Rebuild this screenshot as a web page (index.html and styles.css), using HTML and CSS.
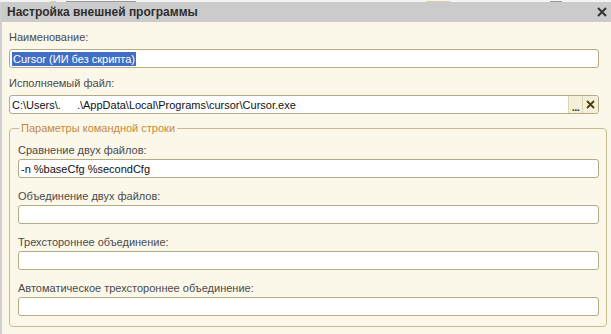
FILE: index.html
```html
<!DOCTYPE html>
<html lang="ru">
<head>
<meta charset="utf-8">
<title>Настройка внешней программы</title>
<link rel="stylesheet" href="styles.css">
</head>
<body>
<div class="screen">
  <div class="behind">
    <span class="mark mark-a"></span>
    <span class="mark mark-b"></span>
    <span class="mark mark-c"></span>
    <span class="mark mark-d"></span>
  </div>
  <div class="dialog">
    <div class="titlebar">
      <span class="title">Настройка внешней программы</span>
      <svg class="close" viewBox="0 0 10 10" aria-hidden="true"><path d="M1 1 L9 9 M9 1 L1 9" stroke="#333" stroke-width="2" fill="none"/></svg>
    </div>
    <div class="content">
      <div class="field">
        <div class="label">Наименование:</div>
        <div class="input"><span class="sel">Cursor (ИИ без скрипта)</span></div>
      </div>
      <div class="field">
        <div class="label">Исполняемый файл:</div>
        <div class="input input-btns">
          <span class="val">C:\Users\.<span class="gap"></span>.\AppData\Local\Programs\cursor\Cursor.exe</span>
          <span class="btn btn-dots">...</span>
          <span class="btn btn-x"><svg viewBox="0 0 9 9" aria-hidden="true"><path d="M1 1 L8 8 M8 1 L1 8" stroke="#4b3f0c" stroke-width="1.8" fill="none"/></svg></span>
        </div>
      </div>
      <fieldset class="group">
        <legend class="legend">Параметры командной строки</legend>
        <div class="field">
          <div class="label label-g">Сравнение двух файлов:</div>
          <div class="input"><span class="val">-n %baseCfg %secondCfg</span></div>
        </div>
        <div class="field">
          <div class="label label-g">Объединение двух файлов:</div>
          <div class="input"></div>
        </div>
        <div class="field">
          <div class="label label-g">Трехстороннее объединение:</div>
          <div class="input"></div>
        </div>
        <div class="field">
          <div class="label label-g">Автоматическое трехстороннее объединение:</div>
          <div class="input"></div>
        </div>
      </fieldset>
    </div>
  </div>
</div>
</body>
</html>
```
FILE: styles.css
```css
html, body {
  margin: 0;
  padding: 0;
}
body {
  font-family: "Liberation Sans", Arial, sans-serif;
  font-size: 11px;
  background: #fbf8ea;
}
.screen {
  width: 611px;
  height: 334px;
  display: flex;
  flex-direction: column;
  overflow: hidden;
}
.behind {
  height: 2px;
  background: #f4f4f2;
  display: flex;
  align-items: flex-end;
}
.mark {
  height: 1px;
  display: block;
}
.mark-a { width: 6px; margin-left: 50px; background: #d9cfa8; }
.mark-b { width: 70px; margin-left: 10px; background: #9a9a9a; }
.mark-c { width: 24px; margin-left: 290px; background: #d9cfa8; }
.mark-d { width: 12px; margin-left: 100px; background: #9a9a9a; }
.dialog {
  flex: 1;
  display: flex;
  flex-direction: column;
  border-left: 2px solid #d0d0d0;
  background: #fbf8ea;
}
.titlebar {
  height: 20px;
  background: #cbcbcb;
  display: flex;
  align-items: center;
  justify-content: space-between;
  padding: 0 4px 0 5px;
}
.title {
  font-weight: bold;
  font-size: 12px;
  color: #2e2e2e;
}
.close {
  width: 10px;
  height: 10px;
  display: block;
}
.content {
  padding: 8px 12px 0 7px;
}
.field + .field {
  margin-top: 8px;
}
.label {
  line-height: 14px;
  height: 14px;
  margin-bottom: 5px;
  color: #4a4a4a;
  white-space: nowrap;
}
.input {
  height: 19px;
  box-sizing: border-box;
  border: 1px solid #b3ab85;
  border-radius: 3px;
  background: #fff;
  display: flex;
  align-items: center;
  padding-left: 2px;
  line-height: 14px;
  color: #111;
  white-space: nowrap;
}
.sel {
  background: #3f6fc4;
  color: #fff;
  padding: 0 1px;
  line-height: 14px;
}
.val {
  flex: 1;
  overflow: hidden;
}
.gap {
  display: inline-block;
  width: 16px;
}
.input-btns {
  padding-right: 0;
  overflow: hidden;
}
.btn {
  height: 100%;
  display: flex;
  align-items: center;
  justify-content: center;
  background: #f4efd9;
  border-left: 1px solid #ddd6b6;
  color: #4b3f0c;
  box-sizing: border-box;
}
.btn-dots {
  width: 14px;
  font-weight: bold;
  align-items: flex-end;
  line-height: 12px;
  letter-spacing: -0.5px;
}
.btn-x {
  width: 16px;
}
.btn-x svg {
  width: 9px;
  height: 9px;
  display: block;
}
.group {
  margin: 7px -8px 0 0;
  padding: 8px 7px 10px 8px;
  border: 1px solid #c5bc94;
  border-radius: 4px;
  min-width: 0;
}
.legend {
  color: #c5883a;
  line-height: 14px;
  padding: 0 2px;
  margin-left: 1px;
}
.group .field + .field {
  margin-top: 11px;
}
.label-g {
  margin-bottom: 2px;
}
```
